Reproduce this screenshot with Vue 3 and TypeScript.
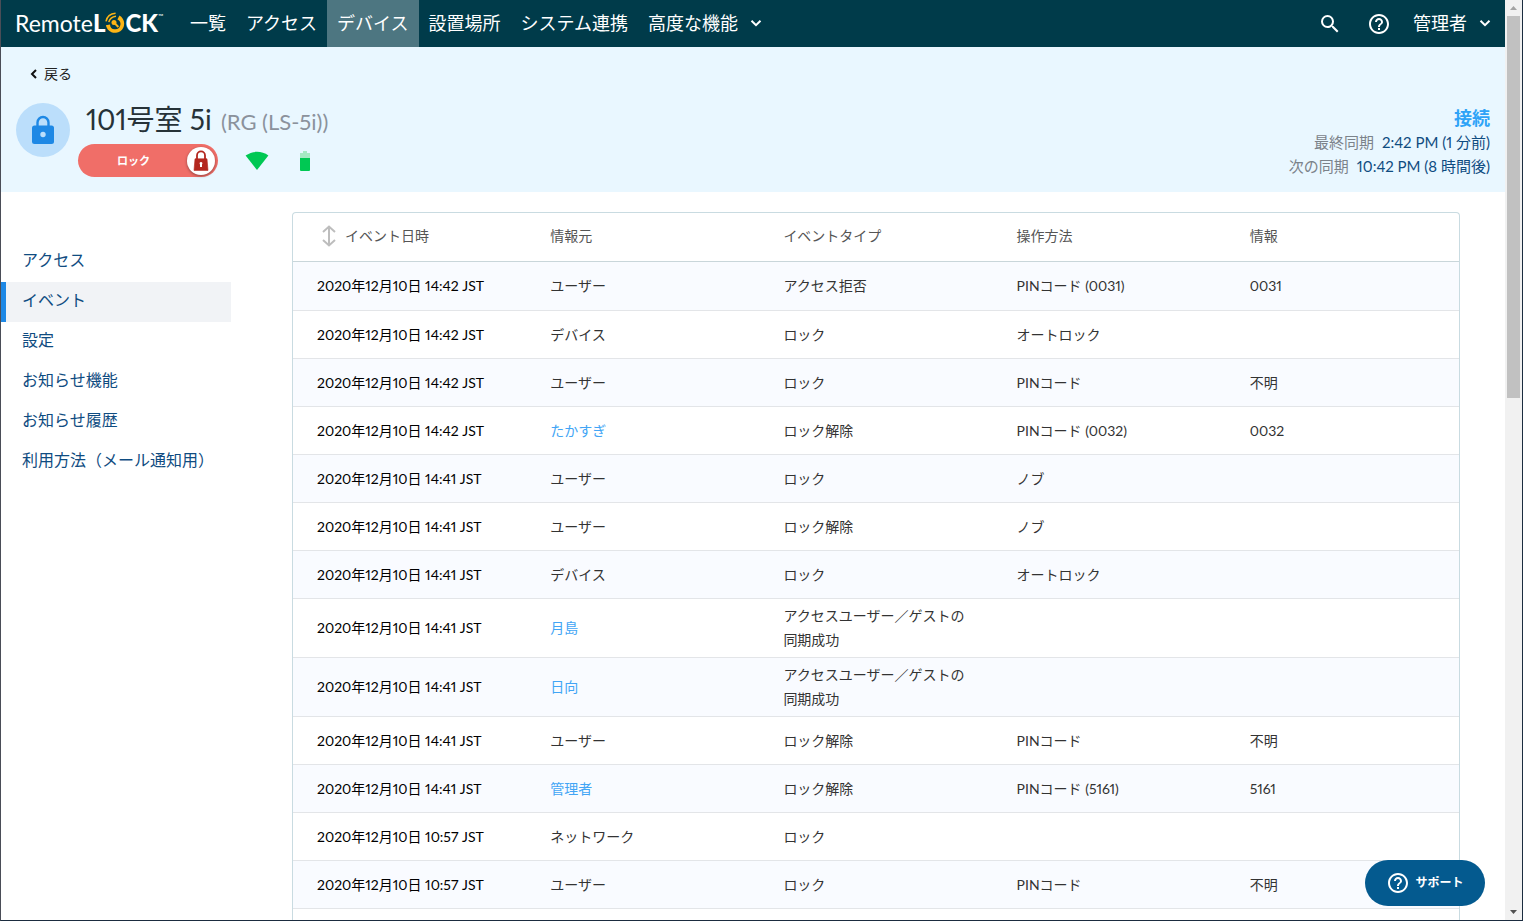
<script setup lang="ts">
interface EventRow {
  time: string
  source: string
  link?: boolean
  type: string
  method?: string
  info?: string
}

const navItems: string[] = ['一覧', 'アクセス', 'デバイス', '設置場所', 'システム連携']
const activeNav = 'デバイス'

const sideItems: string[] = ['アクセス', 'イベント', '設定', 'お知らせ機能', 'お知らせ履歴', '利用方法（メール通知用）']
const activeSide = 'イベント'

const columns: string[] = ['イベント日時', '情報元', 'イベントタイプ', '操作方法', '情報']

const day = '2020年12月10日'
const rows: EventRow[] = [
  { time: '14:42', source: 'ユーザー', type: 'アクセス拒否', method: 'PINコード (0031)', info: '0031' },
  { time: '14:42', source: 'デバイス', type: 'ロック', method: 'オートロック' },
  { time: '14:42', source: 'ユーザー', type: 'ロック', method: 'PINコード', info: '不明' },
  { time: '14:42', source: 'たかすぎ', link: true, type: 'ロック解除', method: 'PINコード (0032)', info: '0032' },
  { time: '14:41', source: 'ユーザー', type: 'ロック', method: 'ノブ' },
  { time: '14:41', source: 'ユーザー', type: 'ロック解除', method: 'ノブ' },
  { time: '14:41', source: 'デバイス', type: 'ロック', method: 'オートロック' },
  { time: '14:41', source: '月島', link: true, type: 'アクセスユーザー／ゲストの同期成功' },
  { time: '14:41', source: '日向', link: true, type: 'アクセスユーザー／ゲストの同期成功' },
  { time: '14:41', source: 'ユーザー', type: 'ロック解除', method: 'PINコード', info: '不明' },
  { time: '14:41', source: '管理者', link: true, type: 'ロック解除', method: 'PINコード (5161)', info: '5161' },
  { time: '10:57', source: 'ネットワーク', type: 'ロック' },
  { time: '10:57', source: 'ユーザー', type: 'ロック', method: 'PINコード', info: '不明' },
]
</script>

<template>
  <div class="window">
    <div class="page">
      <header class="topbar">
        <a class="logo" href="#" aria-label="RemoteLOCK">
          <span>Remote</span><span class="logo-bold">L</span>
          <svg class="logo-o" viewBox="0 0 20 22" aria-hidden="true">
            <path d="M14.4 3.6A9.2 9.2 0 1 1 0.9 13.2L5 12.4A5.2 5.2 0 1 0 12.4 7.4Z" fill="#fdb515" />
            <path d="M1 9.4C1.8 5 5.4 1.6 10.6 1.2M3.8 10.2C4.6 6.8 7.2 4.6 11 4.2" fill="none" stroke="#fdb515" stroke-width="1.5" />
            <circle cx="9" cy="10.6" r="2.5" fill="#fdb515" />
            <path d="M9 10.6L13.4 15" stroke="#fdb515" stroke-width="2" />
          </svg>
          <span class="logo-bold">CK</span><span class="logo-tm">™</span>
        </a>
        <nav class="nav">
          <a v-for="item in navItems" :key="item" href="#" class="nav-item" :class="{ active: item === activeNav }">{{ item }}</a>
          <button type="button" class="nav-item">
            高度な機能
            <svg class="chevron" viewBox="0 0 12 12" aria-hidden="true"><path d="M1.5 3.8L6 8.2L10.5 3.8" /></svg>
          </button>
        </nav>
        <div class="tools">
          <button type="button" class="icon-button" aria-label="検索">
            <svg class="icon" viewBox="0 0 24 24" aria-hidden="true"><path fill="#fff" d="M15.5 14h-.79l-.28-.27A6.47 6.47 0 0 0 16 9.5 6.5 6.5 0 1 0 9.5 16c1.61 0 3.09-.59 4.23-1.57l.27.28v.79l5 4.99L20.49 19l-4.99-5zm-6 0C7.01 14 5 11.99 5 9.5S7.01 5 9.5 5 14 7.01 14 9.5 11.99 14 9.5 14z" /></svg>
          </button>
          <button type="button" class="icon-button" aria-label="ヘルプ">
            <svg class="icon" viewBox="0 0 24 24" aria-hidden="true"><path fill="#fff" d="M11 18h2v-2h-2v2zm1-16C6.48 2 2 6.48 2 12s4.48 10 10 10 10-4.48 10-10S17.52 2 12 2zm0 18c-4.41 0-8-3.59-8-8s3.59-8 8-8 8 3.59 8 8-3.59 8-8 8zm0-14c-2.21 0-4 1.79-4 4h2c0-1.1.9-2 2-2s2 .9 2 2c0 2-3 1.75-3 5h2c0-2.25 3-2.5 3-5 0-2.21-1.79-4-4-4z" /></svg>
          </button>
          <button type="button" class="nav-item">
            管理者
            <svg class="chevron" viewBox="0 0 12 12" aria-hidden="true"><path d="M1.5 3.8L6 8.2L10.5 3.8" /></svg>
          </button>
        </div>
      </header>

      <section class="device">
        <a class="back" href="#">
          <svg class="back-icon" viewBox="0 0 10 10" aria-hidden="true"><path d="M7 1L3 5L7 9" /></svg>
          戻る
        </a>
        <div class="device-row">
          <div class="avatar">
            <svg class="avatar-icon" viewBox="0 0 24 30" aria-hidden="true">
              <path d="M6.5 12V7.5a5.5 5.5 0 0 1 11 0V12" fill="none" stroke="#1e88e5" stroke-width="2.4" />
              <rect x="1" y="10.5" width="22" height="18.5" rx="2.5" fill="#1e88e5" />
              <circle cx="12" cy="19.5" r="2.7" fill="#bbdefb" />
            </svg>
          </div>
          <div class="device-info">
            <h1 class="title">101号室 5i <span class="model">(RG (LS-5i))</span></h1>
            <div class="status">
              <button type="button" class="lock-toggle">
                <span class="lock-label">ロック</span>
                <span class="knob">
                  <svg class="knob-icon" viewBox="0 0 16 22" aria-hidden="true">
                    <path d="M4 10V5.4a4 4 0 0 1 8 0V10" fill="none" stroke="#b3261e" stroke-width="1.8" />
                    <path d="M2 8.8H14L15 20.4H1Z" fill="#b3261e" stroke="#b3261e" stroke-width="0.6" stroke-linejoin="round" />
                    <path d="M8 12a1.4 1.4 0 0 1 1 2.4V17H7v-2.6A1.4 1.4 0 0 1 8 12z" fill="#fff" />
                  </svg>
                </span>
              </button>
              <svg class="wifi" viewBox="0 0 24 20" role="img" aria-label="Wi-Fi"><path d="M0.6 4.6C7.4-0.4 16.6-0.4 23.4 4.6L12 19Z" fill="#00c853" /></svg>
              <svg class="battery" viewBox="0 0 10 20" role="img" aria-label="バッテリー">
                <path d="M3 0h4v2h3v5H0V2h3z" fill="#a6e9c3" />
                <path d="M0 7h10v12a1 1 0 0 1-1 1H1a1 1 0 0 1-1-1z" fill="#00c853" />
              </svg>
            </div>
          </div>
          <div class="sync">
            <strong class="connected">接続</strong>
            <p class="sync-line"><span class="sync-label">最終同期</span>2:42 PM (1 分前)</p>
            <p class="sync-line"><span class="sync-label">次の同期</span>10:42 PM (8 時間後)</p>
          </div>
        </div>
      </section>

      <main class="content">
        <nav class="side">
          <a v-for="item in sideItems" :key="item" href="#" class="side-item" :class="{ active: item === activeSide }">{{ item }}</a>
        </nav>
        <div class="panel">
          <table class="events">
            <thead>
              <tr>
                <th v-for="(column, index) in columns" :key="column" scope="col">
                  <button v-if="index === 0" type="button" class="sort">
                    <svg class="sort-icon" viewBox="0 0 14 22" aria-hidden="true"><path d="M7 2V20M1 7L7 1.6L13 7M1 15L7 20.4L13 15" /></svg>
                    {{ column }}
                  </button>
                  <template v-else>{{ column }}</template>
                </th>
              </tr>
            </thead>
            <tbody>
              <tr v-for="(row, index) in rows" :key="index">
                <td class="date">{{ day }} {{ row.time }} JST</td>
                <td>
                  <a v-if="row.link" href="#" class="user-link">{{ row.source }}</a>
                  <template v-else>{{ row.source }}</template>
                </td>
                <td>{{ row.type }}</td>
                <td>{{ row.method }}</td>
                <td>{{ row.info }}</td>
              </tr>
            </tbody>
          </table>
        </div>
      </main>

      <button type="button" class="support">
        <svg class="icon" viewBox="0 0 24 24" aria-hidden="true"><path fill="#fff" d="M11 18h2v-2h-2v2zm1-16C6.48 2 2 6.48 2 12s4.48 10 10 10 10-4.48 10-10S17.52 2 12 2zm0 18c-4.41 0-8-3.59-8-8s3.59-8 8-8 8 3.59 8 8-3.59 8-8 8zm0-14c-2.21 0-4 1.79-4 4h2c0-1.1.9-2 2-2s2 .9 2 2c0 2-3 1.75-3 5h2c0-2.25 3-2.5 3-5 0-2.21-1.79-4-4-4z" /></svg>
        サポート
      </button>
    </div>

    <div class="scrollbar" aria-hidden="true">
      <svg class="arrow" viewBox="0 0 17 16"><path d="M5 10L8.5 6L12 10Z" fill="#a3a3a3" /></svg>
      <div class="track"><div class="thumb"></div></div>
      <svg class="arrow" viewBox="0 0 17 16"><path d="M5 6L8.5 10L12 6Z" fill="#505050" /></svg>
    </div>
  </div>
</template>

<style>
body {
  margin: 0;
}
</style>

<style scoped>
.window {
  box-sizing: border-box;
  display: grid;
  grid-template-columns: minmax(0, 1fr) 17px;
  height: 100vh;
  overflow: hidden;
  border: 1px solid #1b2c3f;
  border-top: 0;
  border-left-color: #4a4d57;
  background: #fff;
  color: #333;
  font-family: Lato, "Noto Sans CJK JP", sans-serif;
  font-size: 14px;
  line-height: 24px;
  font-variant-numeric: proportional-nums;
}
.page {
  position: relative;
  display: flex;
  flex-direction: column;
  overflow: hidden;
}
a {
  text-decoration: none;
}
button {
  margin: 0;
  padding: 0;
  border: 0;
  background: none;
  color: inherit;
  font: inherit;
  cursor: pointer;
}
.topbar {
  display: flex;
  flex: none;
  align-items: stretch;
  height: 47px;
  background: #003b4a;
  color: #fff;
}
.logo {
  display: flex;
  align-items: center;
  box-sizing: border-box;
  width: 179px;
  padding: 0 0 2px 14px;
  color: #fff;
  font-size: 23px;
}
.logo-bold {
  font-size: 24px;
  font-weight: 900;
}
.logo-o {
  width: 20px;
  height: 22px;
}
.logo-tm {
  align-self: flex-start;
  margin-top: 4px;
  font-size: 7px;
}
.nav,
.tools {
  display: flex;
}
.nav-item {
  display: flex;
  align-items: center;
  gap: 12px;
  padding: 0 10px 2px;
  color: #fff;
  font-size: 18px;
}
.nav-item.active {
  background: #4d7681;
}
.chevron {
  width: 12px;
  height: 12px;
  fill: none;
  stroke: #fff;
  stroke-width: 2;
}
.tools {
  margin-left: auto;
  padding-right: 4px;
}
.icon-button {
  display: flex;
  align-items: center;
  justify-content: center;
  width: 49px;
}
.icon {
  width: 24px;
  height: 24px;
}
.device {
  box-sizing: border-box;
  flex: none;
  height: 145px;
  padding: 15px 15px 0;
  background: #e9f7ff;
}
.back {
  display: inline-flex;
  align-items: center;
  gap: 5px;
  padding-left: 13px;
  color: #222;
}
.back-icon {
  width: 10px;
  height: 10px;
  fill: none;
  stroke: #111;
  stroke-width: 2;
}
.device-row {
  display: flex;
  align-items: flex-start;
  padding-top: 13px;
}
.avatar {
  display: flex;
  align-items: center;
  justify-content: center;
  width: 54px;
  height: 54px;
  margin-top: 4px;
  border-radius: 50%;
  background: #bbdefb;
}
.avatar-icon {
  width: 24px;
  height: 30px;
}
.device-info {
  padding-left: 8px;
}
.title {
  margin: 0;
  padding-left: 8px;
  color: #263238;
  font-size: 28px;
  font-weight: 400;
  line-height: 40px;
}
.model {
  margin-left: 2px;
  color: #8b929c;
  font-size: 22px;
}
.status {
  display: flex;
  align-items: center;
  margin-top: 2px;
}
.lock-toggle {
  display: flex;
  align-items: center;
  box-sizing: border-box;
  width: 140px;
  height: 33px;
  padding: 0 3px 0 2px;
  border-radius: 17px;
  background: #f06e68;
  color: #fff;
  font-size: 11px;
  font-weight: 700;
}
.lock-label {
  flex: 1;
  text-align: center;
}
.knob {
  display: flex;
  align-items: center;
  justify-content: center;
  width: 28px;
  height: 28px;
  border-radius: 50%;
  background: #fff;
  box-shadow: 0 1px 3px rgba(0, 0, 0, 0.4);
}
.knob-icon {
  width: 16px;
  height: 22px;
}
.wifi {
  width: 24px;
  height: 20px;
  margin-left: 27px;
}
.battery {
  width: 10px;
  height: 20px;
  margin-left: 31px;
}
.sync {
  margin-left: auto;
  padding-top: 7px;
  text-align: right;
}
.connected {
  display: block;
  color: #2ea3f7;
  font-size: 18px;
}
.sync-line {
  margin: 0;
  color: #0f4c81;
  font-size: 15px;
}
.sync-label {
  margin-right: 8px;
  color: #7b828a;
}
.content {
  display: grid;
  flex: 1;
  grid-template-columns: 230px minmax(0, 1fr);
  column-gap: 61px;
  padding: 20px 45px 0 0;
}
.side {
  display: flex;
  flex-direction: column;
  padding-top: 30px;
}
.side-item {
  box-sizing: border-box;
  height: 40px;
  padding-left: 16px;
  border-left: 5px solid transparent;
  color: #0f4c81;
  font-size: 16px;
  line-height: 36px;
}
.side-item.active {
  border-left-color: #1e88e5;
  background: #f1f3f6;
}
.panel {
  border: 1px solid #c9dbe1;
  border-bottom: 0;
  border-radius: 4px 4px 0 0;
}
.events {
  width: 100%;
  table-layout: fixed;
  border-collapse: separate;
  border-spacing: 0;
}
.events th {
  height: 46px;
  padding: 0 24px 2px;
  border-bottom: 1px solid #c9d6da;
  color: #555;
  font-weight: 400;
  text-align: left;
}
.sort {
  display: flex;
  align-items: center;
  gap: 9px;
  padding-left: 5px;
}
.sort-icon {
  width: 14px;
  height: 22px;
  fill: none;
  stroke: #bdbdbd;
  stroke-width: 2;
}
.events td {
  height: 37px;
  padding: 5px 24px;
  border-bottom: 1px solid #e3e5e8;
}
.events tbody tr:first-child td {
  height: 38px;
}
.events tbody tr:nth-child(odd) {
  background: #f9fbff;
}
.events .date {
  color: #000;
  white-space: nowrap;
}
.user-link {
  color: #42a5f5;
}
.support {
  position: absolute;
  right: 20px;
  bottom: 14px;
  display: flex;
  align-items: center;
  justify-content: center;
  gap: 5px;
  width: 120px;
  height: 46px;
  border-radius: 23px;
  background: #045a8f;
  color: #fff;
  font-size: 12px;
  font-weight: 700;
}
.scrollbar {
  display: flex;
  flex-direction: column;
  background: #f1f1f1;
}
.arrow {
  flex: none;
  width: 17px;
  height: 16px;
}
.track {
  flex: 1;
  padding: 0 2px;
}
.thumb {
  height: 43%;
  background: #c1c1c1;
}
</style>
